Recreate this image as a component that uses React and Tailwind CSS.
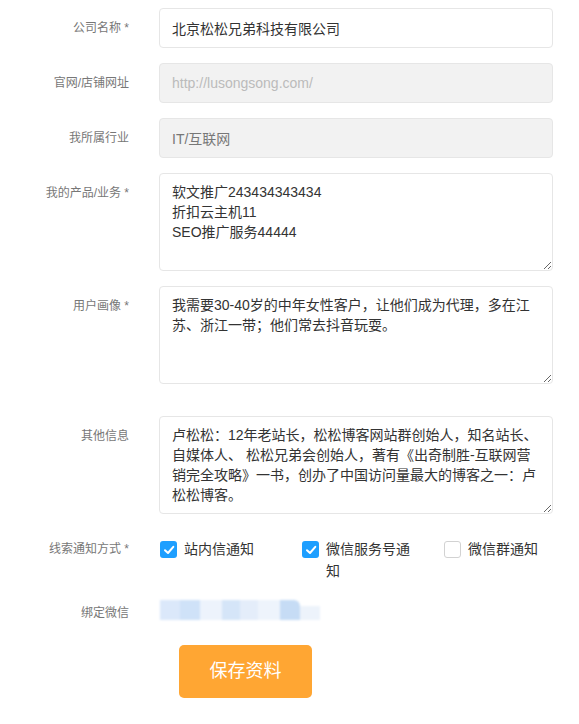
import React, { useState } from "react";

const font = { fontFamily: '"Liberation Sans", "Noto Sans CJK SC", sans-serif' };

const Label = ({ text, required }) => (
    <div className="w-[129px] shrink-0 pt-[10px] text-right text-[12px] leading-[20px] text-[#777]">
        {text}
        {required && <span> *</span>}
    </div>
);

const Row = ({ label, required, className = "", children }) => (
    <div className={`flex items-start ${className}`}>
        <Label text={label} required={required} />
        <div className="ml-[30px] w-[394px]">{children}</div>
    </div>
);

const Checkbox = ({ checked, label, onToggle }) => (
    <button type="button" onClick={onToggle} className="flex w-[142px] items-start text-left">
        {checked ? (
            <span className="mt-[3px] flex h-[17px] w-[17px] shrink-0 items-center justify-center rounded-[3px] bg-[#1e9fff]">
                <svg width="12" height="12" viewBox="0 0 12 12" fill="none">
                    <path d="M2 6.2 L5 9 L10.3 2.8" stroke="#fff" strokeWidth="2" strokeLinecap="round" strokeLinejoin="round" />
                </svg>
            </span>
        ) : (
            <span className="mt-[3px] h-[17px] w-[17px] shrink-0 rounded-[3px] border border-[#d2d2d2] bg-white" />
        )}
        <span className="ml-[7px] w-[90px] text-[14px] leading-[22px] text-[#333]">{label}</span>
    </button>
);

const App = () => {
    const [notify, setNotify] = useState({ site: true, service: true, group: false });

    const toggle = key => setNotify({ ...notify, [key]: !notify[key] });

    return (
        <div className="min-h-[724px] w-[579px] bg-white pt-[8px]" style={font}>
            <Row label="公司名称" required>
                <input
                    defaultValue="北京松松兄弟科技有限公司"
                    className="h-[40px] w-full rounded-[4px] border border-[#e6e6e6] bg-white px-[12px] text-[14px] text-[#333] outline-none"
                />
            </Row>

            <Row label="官网/店铺网址" className="mt-[15px]">
                <input
                    disabled
                    placeholder="http://lusongsong.com/"
                    className="h-[40px] w-full rounded-[4px] border border-[#e6e6e6] bg-[#f2f2f2] px-[12px] text-[14px] text-[#666] placeholder:text-[#bbb]"
                />
            </Row>

            <Row label="我所属行业" className="mt-[15px]">
                <input
                    disabled
                    defaultValue="IT/互联网"
                    className="h-[40px] w-full rounded-[4px] border border-[#e6e6e6] bg-[#f2f2f2] px-[12px] text-[14px] text-[#777]"
                />
            </Row>

            <Row label="我的产品/业务" required className="mt-[15px]">
                <textarea
                    defaultValue={"软文推广243434343434\n折扣云主机11\nSEO推广服务44444"}
                    className="block h-[98px] w-full overflow-hidden rounded-[4px] border border-[#e6e6e6] bg-white px-[12px] py-[8px] text-[14px] leading-[20px] text-[#333] outline-none"
                />
            </Row>

            <Row label="用户画像" required className="mt-[15px]">
                <textarea
                    defaultValue="我需要30-40岁的中年女性客户，让他们成为代理，多在江苏、浙江一带；他们常去抖音玩耍。"
                    className="block h-[98px] w-full overflow-hidden rounded-[4px] border border-[#e6e6e6] bg-white px-[12px] py-[8px] text-[14px] leading-[20px] text-[#333] outline-none"
                />
            </Row>

            <Row label="其他信息" className="mt-[32px]">
                <textarea
                    defaultValue="卢松松：12年老站长，松松博客网站群创始人，知名站长、自媒体人、 松松兄弟会创始人，著有《出奇制胜-互联网营销完全攻略》一书，创办了中国访问量最大的博客之一：卢松松博客。"
                    className="block h-[98px] w-full overflow-hidden rounded-[4px] border border-[#e6e6e6] bg-white px-[12px] py-[8px] text-[14px] leading-[20px] text-[#333] outline-none"
                />
            </Row>

            <div className="mt-[24px] flex items-start">
                <div className="w-[129px] shrink-0 text-right text-[12px] leading-[22px] text-[#777]">
                    线索通知方式 *
                </div>
                <div className="ml-[31px] flex">
                    <Checkbox checked={notify.site} label="站内信通知" onToggle={() => toggle("site")} />
                    <Checkbox checked={notify.service} label="微信服务号通知" onToggle={() => toggle("service")} />
                    <Checkbox checked={notify.group} label="微信群通知" onToggle={() => toggle("group")} />
                </div>
            </div>

            <div className="mt-[18px] flex items-start">
                <div className="w-[129px] shrink-0 pt-[3px] text-right text-[12px] leading-[20px] text-[#777]">
                    绑定微信
                </div>
                {/* blurred account name */}
                <div className="ml-[31px] flex h-[20px] items-end blur-[1px]">
                    <div className="h-[20px] w-[20px] bg-[#dbe8fa]" />
                    <div className="h-[20px] w-[20px] bg-[#cfe2f8]" />
                    <div className="h-[20px] w-[22px] bg-[#edf3fc]" />
                    <div className="h-[20px] w-[18px] bg-[#d5e5f8]" />
                    <div className="h-[20px] w-[18px] bg-[#e4edfa]" />
                    <div className="h-[20px] w-[22px] bg-[#eef4fc]" />
                    <div className="h-[20px] w-[20px] rounded-tr-[6px] bg-[#c6dcf5]" />
                    <div className="h-[14px] w-[20px] bg-[#edf3fb]" />
                </div>
            </div>

            <div className="mt-[22px] pl-[179px]">
                <button
                    type="button"
                    className="h-[53px] w-[133px] rounded-[5px] bg-[#ffa633] text-[18px] text-white"
                >
                    保存资料
                </button>
            </div>
        </div>
    );
};

export default App;
